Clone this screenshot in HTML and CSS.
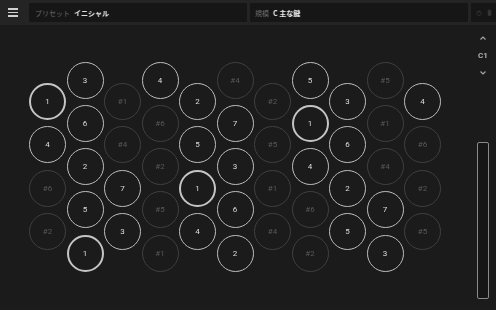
FILE: index.html
```html
<html>

<head>
  <title>Keyboard</title>
  <link rel="stylesheet" href="styles.css">
</head>

<body>

  <header class="bar">
    <button class="menu" aria-label="menu">
      <span></span><span></span><span></span>
    </button>
    <div class="field"><span class="label">プリセット</span><span class="value">イニシャル</span></div>
    <div class="field"><span class="label">規模</span><span class="value">C 主な鍵</span></div>
    <div class="tools">
      <svg width="6" height="6" viewBox="0 0 12 12"><circle cx="6" cy="6.5" r="4.5" fill="none" stroke="currentColor" stroke-width="1.6"/><path d="M6 1v5" stroke="currentColor" stroke-width="1.6"/></svg>
      <svg width="5" height="7" viewBox="0 0 10 14"><path d="M1 3h8M3.5 3V1.5h3V3M2 4h6v9H2z" fill="currentColor" stroke="currentColor" stroke-width="1"/></svg>
    </div>
  </header>

  <main>
    <div class="board">
      <div class="col low">
        <div class="key root">1</div>
        <div class="key">4</div>
        <div class="key sharp">#6</div>
        <div class="key sharp">#2</div>
      </div>
      <div class="col">
        <div class="key">3</div>
        <div class="key">6</div>
        <div class="key">2</div>
        <div class="key">5</div>
        <div class="key root">1</div>
      </div>
      <div class="col low">
        <div class="key sharp">#1</div>
        <div class="key sharp">#4</div>
        <div class="key">7</div>
        <div class="key">3</div>
      </div>
      <div class="col">
        <div class="key">4</div>
        <div class="key sharp">#6</div>
        <div class="key sharp">#2</div>
        <div class="key sharp">#5</div>
        <div class="key sharp">#1</div>
      </div>
      <div class="col low">
        <div class="key">2</div>
        <div class="key">5</div>
        <div class="key root">1</div>
        <div class="key">4</div>
      </div>
      <div class="col">
        <div class="key sharp">#4</div>
        <div class="key">7</div>
        <div class="key">3</div>
        <div class="key">6</div>
        <div class="key">2</div>
      </div>
      <div class="col low">
        <div class="key sharp">#2</div>
        <div class="key sharp">#5</div>
        <div class="key sharp">#1</div>
        <div class="key sharp">#4</div>
      </div>
      <div class="col">
        <div class="key">5</div>
        <div class="key root">1</div>
        <div class="key">4</div>
        <div class="key sharp">#6</div>
        <div class="key sharp">#2</div>
      </div>
      <div class="col low">
        <div class="key">3</div>
        <div class="key">6</div>
        <div class="key">2</div>
        <div class="key">5</div>
      </div>
      <div class="col">
        <div class="key sharp">#5</div>
        <div class="key sharp">#1</div>
        <div class="key sharp">#4</div>
        <div class="key">7</div>
        <div class="key">3</div>
      </div>
      <div class="col low">
        <div class="key">4</div>
        <div class="key sharp">#6</div>
        <div class="key sharp">#2</div>
        <div class="key sharp">#5</div>
      </div>
    </div>

    <aside class="side">
      <svg class="chev" width="6" height="4" viewBox="0 0 6 4"><path d="M0.5 3.5L3 1l2.5 2.5" fill="none" stroke="currentColor" stroke-width="1.1"/></svg>
      <div class="octave">C1</div>
      <svg class="chev" width="6" height="4" viewBox="0 0 6 4"><path d="M0.5 0.5L3 3l2.5-2.5" fill="none" stroke="currentColor" stroke-width="1.1"/></svg>
      <div class="slider"></div>
    </aside>
  </main>

</body>

</html>
```

FILE: styles.css
```css
body {
  margin: 0;
  width: 496px;
  height: 310px;
  overflow: hidden;
  background-color: #1b1b1b;
  font-family: Roboto, "Noto Sans CJK JP", sans-serif;
  /* keep the tiny labels free of colour fringes */
  filter: grayscale(1);
}

.bar {
  display: flex;
  align-items: center;
  gap: 3px;
  height: 25px;
  box-sizing: border-box;
  padding: 3px 0 3px 0;
  background-color: #242424;
}

.menu {
  width: 26px;
  height: 19px;
  padding: 0;
  border: none;
  background: none;
  display: flex;
  flex-direction: column;
  align-items: center;
  justify-content: center;
  gap: 2px;
}

.menu span {
  display: block;
  width: 10px;
  height: 1.5px;
  background-color: #d0d0d0;
}

.field {
  width: 218px;
  height: 19px;
  box-sizing: border-box;
  padding-left: 6px;
  display: flex;
  align-items: center;
  gap: 4px;
  background-color: #161616;
  font-family: "Noto Sans CJK JP", sans-serif;
  font-size: 7px;
}

.field + .field {
  padding-left: 5px;
}

.label {
  color: #6a6a6a;
}

.value {
  color: #e0e0e0;
  font-weight: bold;
}

.tools {
  flex: 1;
  height: 19px;
  display: flex;
  align-items: center;
  gap: 5px;
  padding-left: 5px;
  background-color: #161616;
  color: #363636;
}

main {
  display: flex;
  height: 285px;
}

.board {
  flex: 1;
  display: flex;
  align-items: flex-start;
  padding: 36.5px 0 0 29px;
}

.col {
  display: flex;
  flex-direction: column;
  gap: 6.3px;
  margin-right: 0.5px;
}

.col.low {
  margin-top: 21.65px;
}

.key {
  width: 37px;
  height: 37px;
  box-sizing: border-box;
  border: 1px solid #bdbdbd;
  border-radius: 50%;
  display: flex;
  align-items: center;
  justify-content: center;
  font-size: 8px;
  color: #dcdcdc;
}

.key.sharp {
  border-color: #404040;
  color: #585858;
}

.key.root {
  border: 2px solid #c4c4c4;
}

.side {
  width: 26px;
  display: flex;
  flex-direction: column;
  align-items: center;
  padding: 11px 0 11px 0;
  color: #a8a8a8;
}

.octave {
  margin: 11px 0 11px 0;
  font-size: 8px;
  font-weight: bold;
  color: #b0b0b0;
}

.slider {
  margin-top: auto;
  width: 12px;
  height: 157px;
  box-sizing: border-box;
  border: 1.5px solid #8a8a8a;
  border-radius: 2px;
  background-color: #161616;
}
```
